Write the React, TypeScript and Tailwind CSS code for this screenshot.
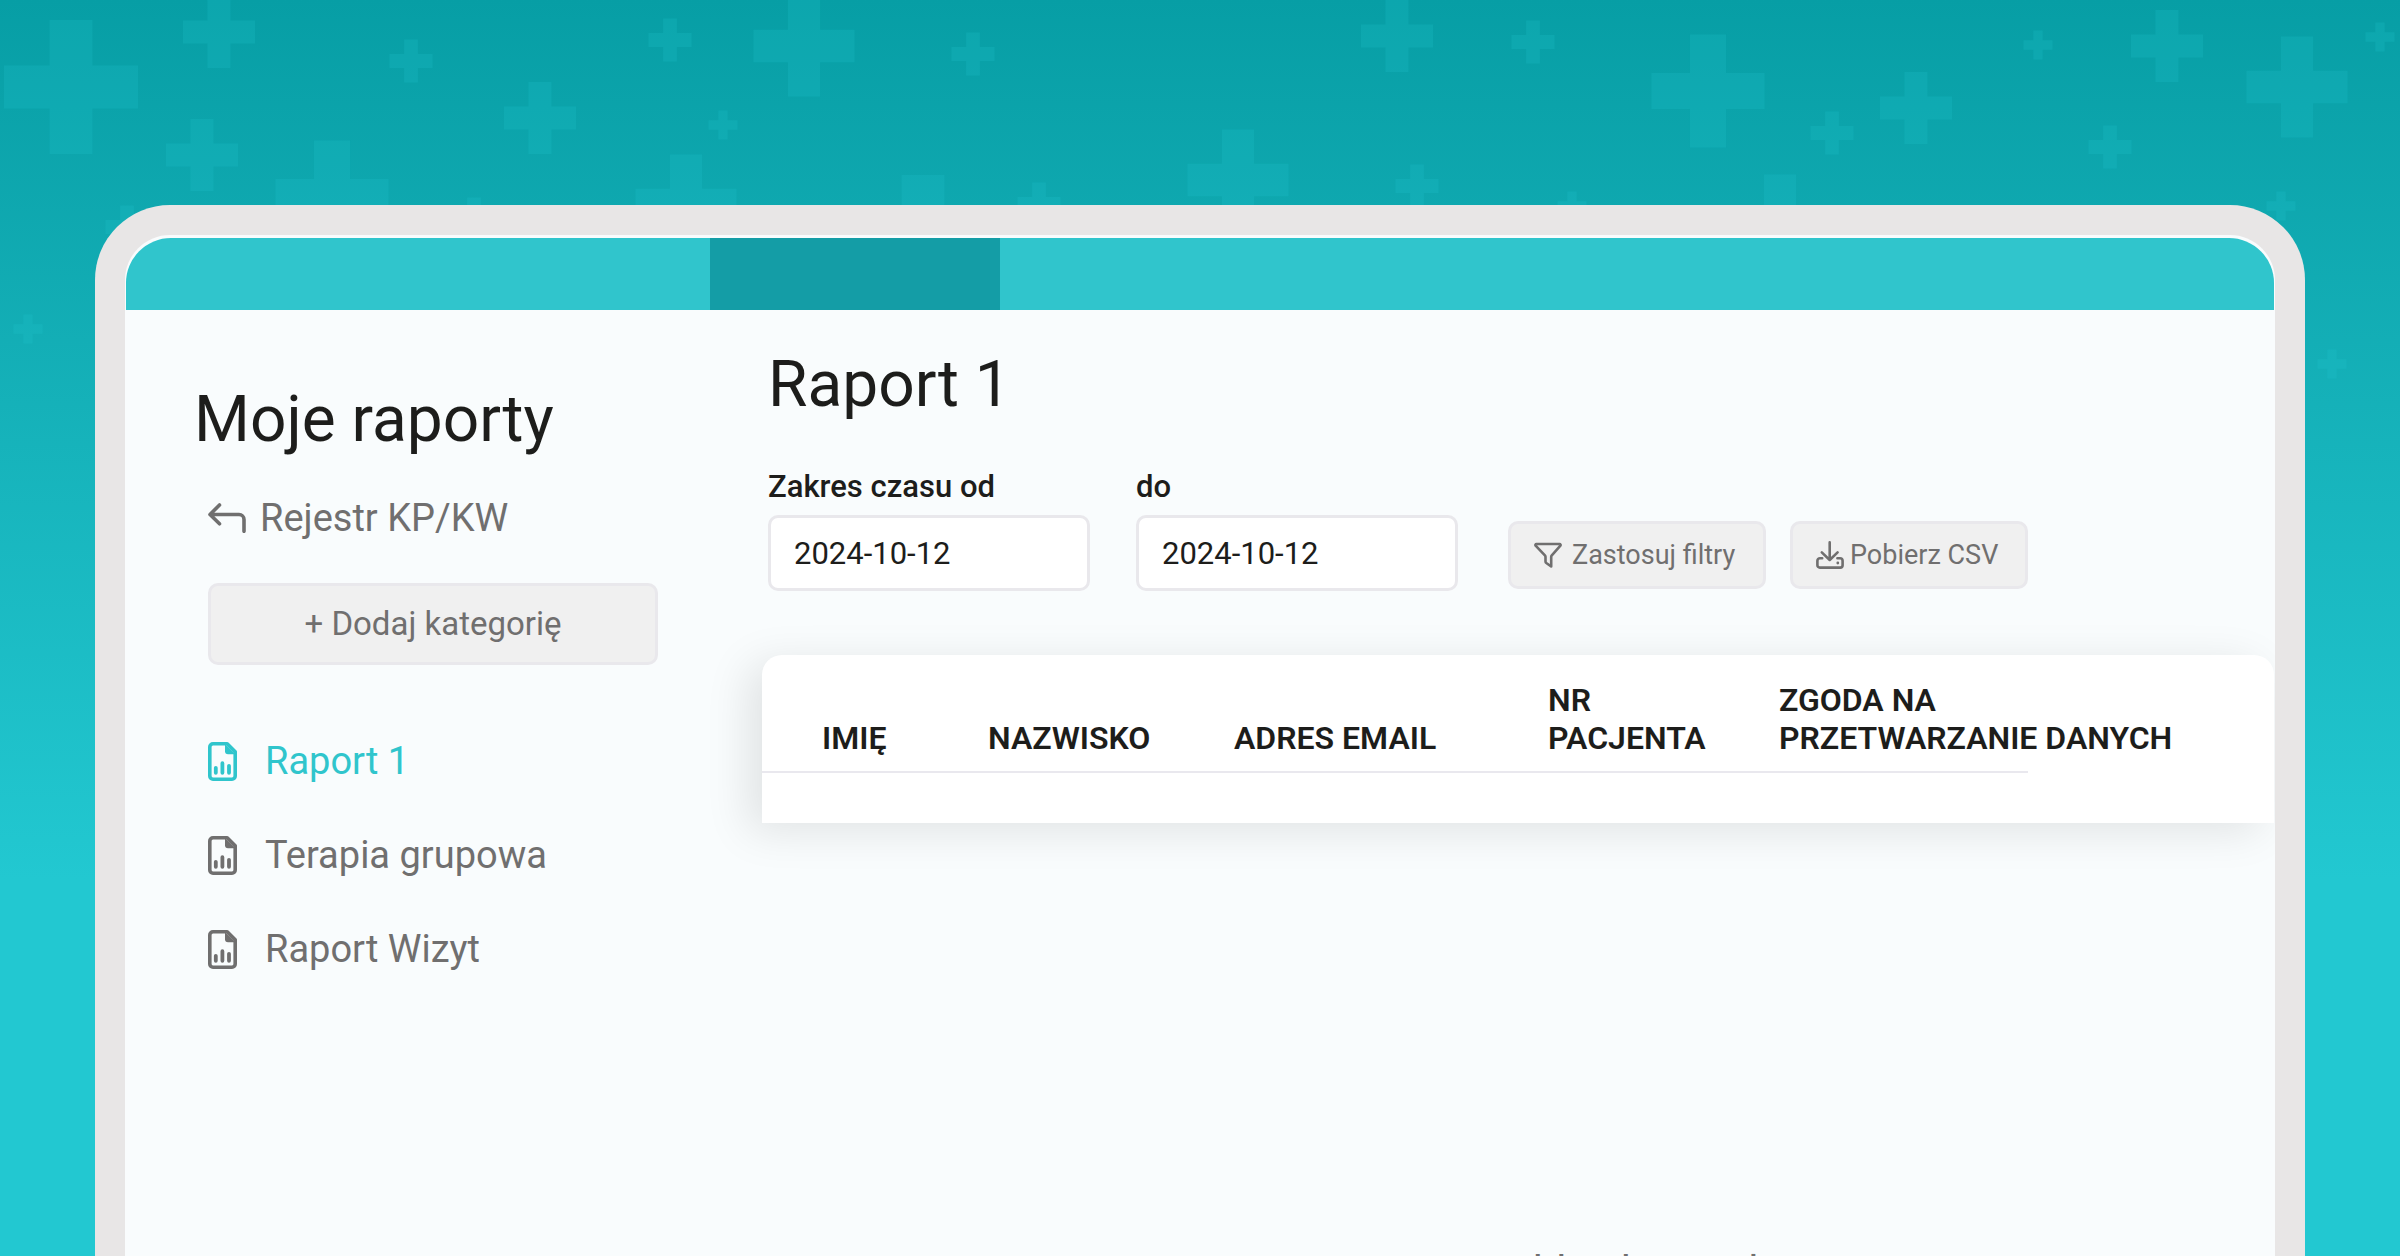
import { useState } from "react";

type PlusMark = [cx: number, cy: number, size: number];

const pluses: PlusMark[] = [
  [71, 87, 134], [219, 32, 72], [411, 61, 43], [540, 118, 72], [670, 40, 43], [723, 125, 29],
  [202, 155, 72], [332, 197, 113], [474, 219, 43], [686, 205, 101], [127, 227, 43], [28, 329, 29],
  [804, 46, 101], [973, 54, 43], [1397, 36, 72], [1533, 42, 43], [923, 242, 134], [1039, 204, 43],
  [1238, 180, 101], [1417, 186, 43], [1572, 206, 29], [1708, 91, 113], [1832, 133, 43], [1916, 108, 72],
  [2038, 45, 29], [2167, 46, 72], [2297, 87, 101], [2380, 37, 29], [2110, 147, 43], [1780, 225, 101],
  [2281, 206, 29], [2332, 364, 29],
];

const reports = ["Raport 1", "Terapia grupowa", "Raport Wizyt"];

function PlusPattern() {
  return (
    <svg className="absolute inset-x-0 top-0 w-full" viewBox="0 0 2400 400" fill="#22c8d1" fillOpacity="0.2" aria-hidden="true">
      {pluses.map(([cx, cy, s], i) => {
        const h = s / 2;
        const t = s * 0.16;
        return (
          <path
            key={i}
            d={`M${cx - t} ${cy - h}H${cx + t}V${cy - t}H${cx + h}V${cy + t}H${cx + t}V${cy + h}H${cx - t}V${cy + t}H${cx - h}V${cy - t}H${cx - t}Z`}
          />
        );
      })}
    </svg>
  );
}

function BackIcon() {
  return (
    <svg width="38" height="30" viewBox="0 0 38 30" fill="none" stroke="currentColor" strokeWidth="3.6" strokeLinecap="round" strokeLinejoin="round" aria-hidden="true">
      <path d="M11.5 2L2 11.5l9.5 9.3M2 11.5h29a5 5 0 0 1 5 5V28.3" />
    </svg>
  );
}

function ReportIcon() {
  return (
    <svg width="29" height="39" viewBox="0 0 29 39" fill="none" stroke="currentColor" strokeLinecap="round" strokeLinejoin="round" aria-hidden="true">
      <path d="M5 1.8h14.2l8 8V34a3.2 3.2 0 0 1-3.2 3.2H5A3.2 3.2 0 0 1 1.8 34V5A3.2 3.2 0 0 1 5 1.8Z" strokeWidth="3.6" />
      <path d="M17 2l10.5 10.2H20a3 3 0 0 1-3-3Z" fill="currentColor" stroke="none" />
      <path d="M7.8 25.8v5M14.4 21.2v9.6M21 23.8v7" strokeWidth="3.8" />
    </svg>
  );
}

function FilterIcon() {
  return (
    <svg width="28" height="28" viewBox="0 0 28 28" fill="none" stroke="currentColor" strokeWidth="2.6" strokeLinecap="round" strokeLinejoin="round" aria-hidden="true">
      <path d="M2.4 3h23.2a1 1 0 0 1 .8 1.6l-8.6 9.8a2.4 2.4 0 0 0-.6 1.5v9.6l-4.9-3.5a2 2 0 0 1-.8-1.6v-4.5a2.4 2.4 0 0 0-.6-1.5L1.6 4.6A1 1 0 0 1 2.4 3Z" />
    </svg>
  );
}

function DownloadIcon() {
  return (
    <svg width="28" height="28" viewBox="0 0 28 28" fill="none" stroke="currentColor" strokeWidth="2.6" strokeLinecap="round" strokeLinejoin="round" aria-hidden="true">
      <path d="M13.7 1.4v17.4M5.8 11.4l7.9 7.6 7.9-7.6" />
      <path d="M6.2 17.2H4a2.6 2.6 0 0 0-2.6 2.6v4.4A2.4 2.4 0 0 0 3.8 26.6h20.4a2.4 2.4 0 0 0 2.4-2.4v-4.4a2.6 2.6 0 0 0-2.6-2.6h-2.6" />
      <circle cx="21.8" cy="22" r="1.4" fill="currentColor" stroke="none" />
    </svg>
  );
}

function DateField({ id, label, value, onChange }: { id: string; label: string; value: string; onChange: (v: string) => void }) {
  return (
    <div>
      <label htmlFor={id} className="block text-[31px] leading-10 font-medium">{label}</label>
      <input
        id={id}
        type="text"
        value={value}
        onChange={(e) => onChange(e.target.value)}
        className="mt-2 block h-[76px] w-[322px] rounded-[10px] border-3 border-[#e9e8ec] bg-white px-[23px] text-[31px]"
      />
    </div>
  );
}

export default function App() {
  const [active, setActive] = useState("Raport 1");
  const [from, setFrom] = useState("2024-10-12");
  const [to, setTo] = useState("2024-10-12");

  return (
    <div className="relative flex h-screen flex-col overflow-hidden bg-linear-to-b from-[#079ea5] to-[#22c8d1] to-70% px-[95px] pt-[205px] font-[Roboto,sans-serif] text-[#1d1d1b]">
      <PlusPattern />
      <div className="relative flex-1 rounded-t-[75px] border-x-[30px] border-t-[30px] border-[#e8e6e6] bg-[#f9fcfd]">
        <header className="mx-px mt-[3px] h-[72px] overflow-hidden rounded-t-[45px] bg-[#30c5cc]">
          <div className="ml-[584px] h-full w-[290px] bg-[#149da6]" />
        </header>

        <div className="flex">
          <aside className="w-[637px] shrink-0 pr-[104px] pl-[83px] text-[#706f6f]">
            <h1 className="-ml-3.5 pt-[72px] text-[64px] leading-[76px] text-[#1d1d1b]">Moje raporty</h1>
            <a href="#rejestr" className="mt-[38px] flex items-center gap-3.5 text-[38px] leading-[44px]">
              <BackIcon />
              Rejestr KP/KW
            </a>
            <button type="button" className="mt-[43px] h-[82px] w-full rounded-[10px] border-3 border-[#e9e8ec] bg-[#f0f0f0] text-[33px]">
              + Dodaj kategorię
            </button>
            <nav className="mt-[74px] flex flex-col gap-[50px]">
              {reports.map((r) => (
                <a
                  key={r}
                  href="#raport"
                  onClick={() => setActive(r)}
                  className={`flex items-center gap-7 text-[38px] leading-[44px] ${r === active ? "text-[#30c5cc]" : ""}`}
                >
                  <ReportIcon />
                  {r}
                </a>
              ))}
            </nav>
          </aside>

          <main className="min-w-0 flex-1">
            <div className="pl-1.5">
              <h2 className="pt-[37px] text-[64px] leading-[76px]">Raport 1</h2>
              <div className="mt-11 flex items-end">
                <DateField id="od" label="Zakres czasu od" value={from} onChange={setFrom} />
                <div className="ml-[46px]">
                  <DateField id="do" label="do" value={to} onChange={setTo} />
                </div>
                <div className="mb-0.5 ml-[50px] flex gap-6 text-[27px] text-[#706f6f]">
                  <button type="button" className="flex h-[68px] w-[258px] items-center gap-2.5 rounded-[10px] border-3 border-[#e9e8ec] bg-[#f0f0f0] pl-[23px]">
                    <FilterIcon />
                    Zastosuj filtry
                  </button>
                  <button type="button" className="flex h-[68px] w-[238px] items-center gap-1.5 rounded-[10px] border-3 border-[#e9e8ec] bg-[#f0f0f0] pl-[23px]">
                    <DownloadIcon />
                    Pobierz CSV
                  </button>
                </div>
              </div>
            </div>

            <div className="-ml-16 overflow-hidden pt-16 pb-16 pl-16">
              <section className="mr-px rounded-t-[20px] bg-white pb-[50px] shadow-[-14px_8px_44px_rgba(0,0,0,0.1)]">
                <table className="w-full table-fixed text-left text-[32px] leading-[38px]">
                  <thead>
                    <tr className="h-[116px] align-bottom">
                      <th className="w-[226px] pb-3.5 pl-[60px] font-semibold">IMIĘ</th>
                      <th className="w-[246px] pb-3.5 font-semibold">NAZWISKO</th>
                      <th className="w-[314px] pb-3.5 font-semibold">ADRES EMAIL</th>
                      <th className="w-[231px] pb-3.5 font-semibold">NR<br />PACJENTA</th>
                      <th className="pb-3.5 font-semibold">ZGODA NA<br />PRZETWARZANIE DANYCH</th>
                    </tr>
                  </thead>
                </table>
                <hr className="mr-[246px] border-t-2 border-[#e9e8ee]" />
              </section>
            </div>

            <p className="mt-[360px] pl-[728px] text-[42px] leading-[50px] whitespace-nowrap text-[#706f6f]">Oddział neurologii</p>
          </main>
        </div>
      </div>
    </div>
  );
}
